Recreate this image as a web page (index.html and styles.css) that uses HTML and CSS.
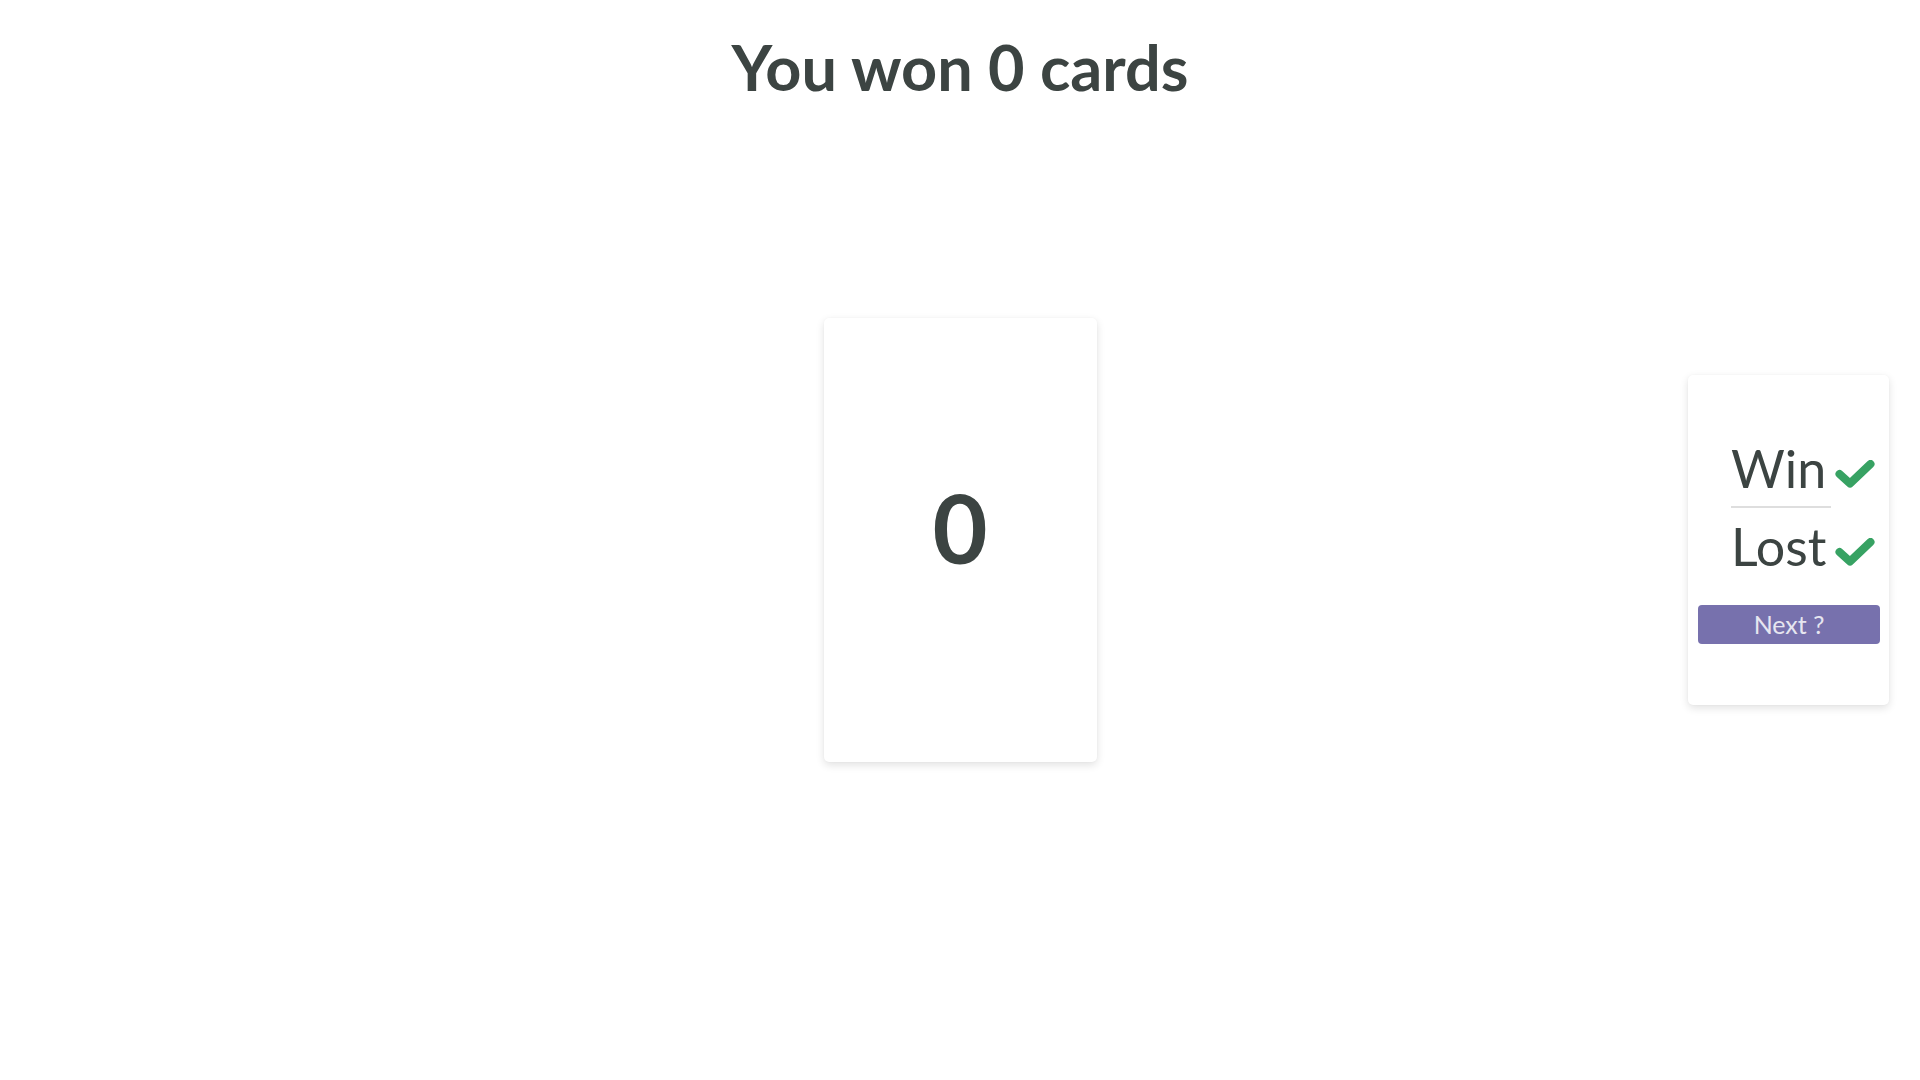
FILE: index.html
```html
<!DOCTYPE html>
<html lang="en">
<head>
<meta charset="utf-8">
<title>You won 0 cards</title>
<link rel="stylesheet" href="styles.css">
</head>
<body>
<main class="page">
  <h1 class="title">You won 0 cards</h1>
  <section class="card">
    <span class="card-value">0</span>
  </section>
  <aside class="panel">
    <div class="row">
      <span class="label">Win</span>
      <svg class="check" width="40" height="28" viewBox="0 0 40 28" aria-hidden="true"><polyline points="4.5,14 15,23.5 35.5,4" /></svg>
    </div>
    <div class="divider"></div>
    <div class="row">
      <span class="label">Lost</span>
      <svg class="check" width="40" height="28" viewBox="0 0 40 28" aria-hidden="true"><polyline points="4.5,14 15,23.5 35.5,4" /></svg>
    </div>
    <button class="next" type="button">Next ?</button>
  </aside>
</main>
</body>
</html>
```

FILE: styles.css
```css
html, body {
  margin: 0;
  padding: 0;
  background: #ffffff;
}

body {
  font-family: Lato, "Liberation Sans", sans-serif;
  color: #3c4442;
}

.page {
  height: 100vh;
  display: grid;
  grid-template-columns: 1fr 273px 1fr;
  grid-template-rows: 1fr auto 1fr;
  align-items: center;
}

.title {
  grid-column: 1 / 4;
  grid-row: 1;
  align-self: start;
  margin: 29px 0 0;
  text-align: center;
  font-size: 63px;
  font-weight: 700;
  line-height: normal;
}

.card {
  grid-column: 2;
  grid-row: 2;
  height: 444px;
  box-sizing: border-box;
  padding-bottom: 26px;
  background: #fff;
  border-radius: 5px;
  box-shadow: 0 3px 8px rgba(0, 0, 0, 0.12), 0 0 2px rgba(0, 0, 0, 0.04);
  display: flex;
  align-items: center;
  justify-content: center;
}

.card-value {
  font-size: 95px;
  font-weight: 700;
  line-height: normal;
}

.panel {
  grid-column: 3;
  grid-row: 2;
  justify-self: end;
  margin-right: 31px;
  width: 201px;
  height: 330px;
  box-sizing: border-box;
  padding: 0 9px 0 10px;
  background: #fff;
  border-radius: 5px;
  box-shadow: 0 3px 8px rgba(0, 0, 0, 0.12), 0 0 2px rgba(0, 0, 0, 0.04);
  display: flex;
  flex-direction: column;
  justify-content: center;
}

.row {
  display: flex;
  align-items: baseline;
  justify-content: space-between;
  padding: 0 5px 0 33px;
}

.label {
  font-size: 52px;
  font-weight: 400;
  line-height: normal;
}

.check {
  display: block;
}

.check polyline {
  fill: none;
  stroke: #37a263;
  stroke-width: 8;
  stroke-linecap: round;
  stroke-linejoin: round;
}

.divider {
  width: 100px;
  height: 2px;
  margin: 7px 0 7px 33px;
  background: #dedede;
}

.next {
  margin-top: 28px;
  height: 39px;
  border: 0;
  border-radius: 4px;
  padding: 0;
  background: #7771ad;
  color: #e6e6f0;
  font-family: Lato, "Liberation Sans", sans-serif;
  font-size: 25px;
  line-height: normal;
  cursor: pointer;
}
```
